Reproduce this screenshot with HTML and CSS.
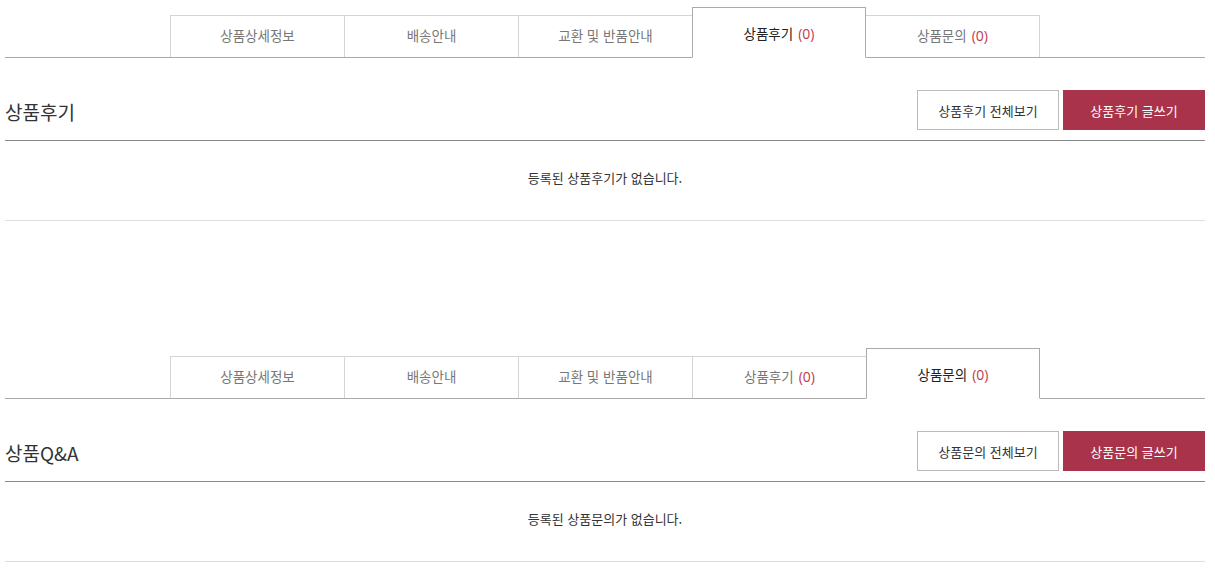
FILE: index.html
```html
<!DOCTYPE html>
<html lang="ko">
<head>
<meta charset="utf-8">
<title>상품후기 / 상품Q&amp;A</title>
<link rel="stylesheet" href="styles.css">
</head>
<body>
<div class="page">
  <section class="board">
    <ul class="tabs">
      <li class="tab">상품상세정보</li>
      <li class="tab">배송안내</li>
      <li class="tab">교환 및 반품안내</li>
      <li class="tab active">상품후기 <span class="count">(0)</span></li>
      <li class="tab">상품문의 <span class="count">(0)</span></li>
    </ul>
    <div class="board-head">
      <h2 class="board-title">상품후기</h2>
      <div class="board-actions">
        <a class="btn btn-line">상품후기 전체보기</a>
        <a class="btn btn-fill">상품후기 글쓰기</a>
      </div>
    </div>
    <div class="board-empty">등록된 상품후기가 없습니다.</div>
  </section>

  <section class="board board-second">
    <ul class="tabs">
      <li class="tab">상품상세정보</li>
      <li class="tab">배송안내</li>
      <li class="tab">교환 및 반품안내</li>
      <li class="tab">상품후기 <span class="count">(0)</span></li>
      <li class="tab active">상품문의 <span class="count">(0)</span></li>
    </ul>
    <div class="board-head">
      <h2 class="board-title">상품Q&amp;A</h2>
      <div class="board-actions">
        <a class="btn btn-line">상품문의 전체보기</a>
        <a class="btn btn-fill">상품문의 글쓰기</a>
      </div>
    </div>
    <div class="board-empty">등록된 상품문의가 없습니다.</div>
  </section>
</div>
</body>
</html>
```
FILE: styles.css
```css
* { box-sizing: border-box; }
html, body { margin: 0; padding: 0; background: #fff; }
body {
  font-family: "Noto Sans CJK KR", "Noto Sans", "Liberation Sans", sans-serif;
  color: #333;
}
.page {
  width: 1200px;
  margin-left: 5px;
}
.board { padding-top: 7px; }
.board-second { margin-top: 120px; }

.tabs {
  list-style: none;
  margin: 0;
  padding: 0;
  height: 51px;
  display: flex;
  justify-content: center;
  align-items: flex-end;
  border-bottom: 1px solid #aaa;
}
.tab {
  width: 174px;
  height: 42px;
  padding-bottom: 3px;
  border: 1px solid #d5d5d5;
  border-right: 0;
  border-bottom: 0;
  display: flex;
  align-items: center;
  justify-content: center;
  gap: 5px;
  font-size: 13.5px;
  color: #777;
  background: #fff;
  white-space: nowrap;
}
.tab:last-child { border-right: 1px solid #d5d5d5; }
.tab.active {
  height: 51px;
  margin-bottom: -1px;
  border: 1px solid #aaa;
  border-bottom: 1px solid #fff;
  color: #222;
  padding-top: 1px;
  padding-bottom: 0;
}
.tab.active + .tab { border-left: 0; }
.count {
  color: #c0394d;
  font-family: "Open Sans", "Noto Sans", sans-serif;
  font-size: 14px;
}

.board-head {
  display: flex;
  justify-content: space-between;
  align-items: flex-end;
  padding-top: 32px;
  padding-bottom: 10px;
  border-bottom: 1px solid #888;
}
.board-title {
  margin: 0 0 5px 0;
  font-size: 19px;
  font-weight: normal;
  color: #333;
  line-height: 26px;
}
.board-actions { display: flex; gap: 4px; }
.btn {
  width: 142px;
  height: 40px;
  display: flex;
  align-items: center;
  justify-content: center;
  font-size: 13px;
  font-weight: normal;
  text-decoration: none;
}
.btn-line {
  border: 1px solid #bbb;
  color: #333;
  background: #fff;
}
.btn-fill {
  background: #a8334b;
  color: #fff;
}
.board-empty {
  height: 80px;
  padding-bottom: 6px;
  display: flex;
  align-items: center;
  justify-content: center;
  font-size: 13px;
  color: #333;
  border-bottom: 1px solid #ddd;
}
```
